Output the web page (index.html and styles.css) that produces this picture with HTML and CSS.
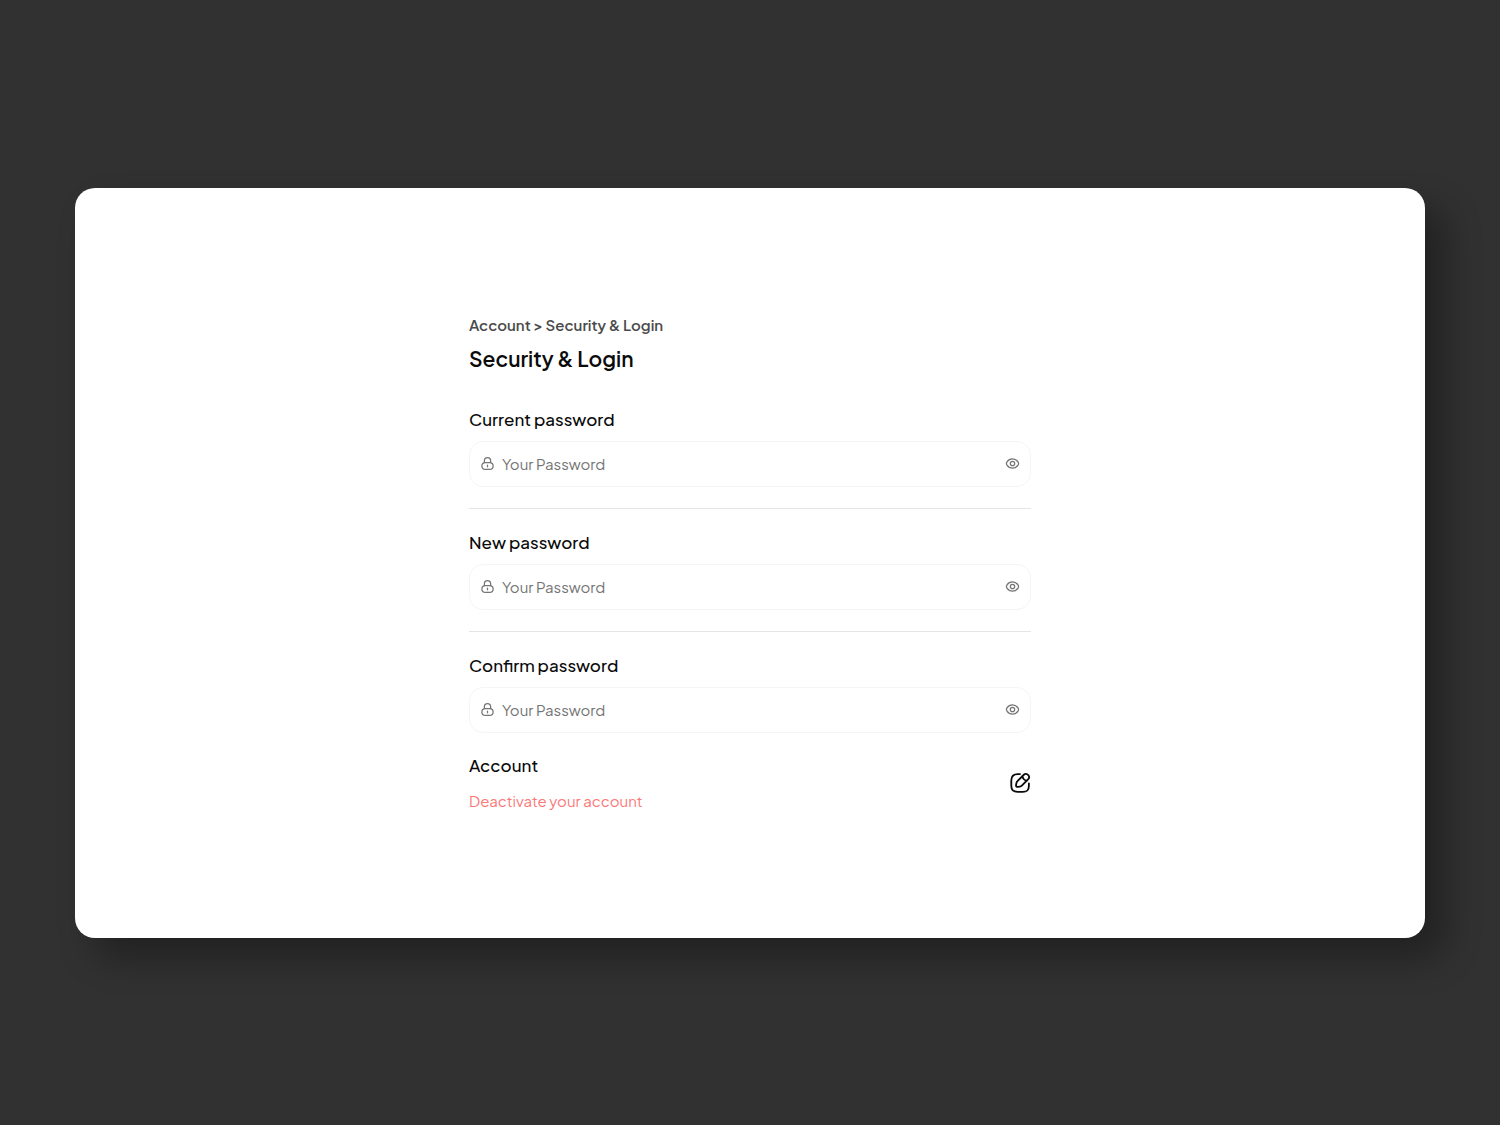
FILE: index.html
```html
<!DOCTYPE html>
<html lang="en">
<head>
<meta charset="utf-8">
<meta name="viewport" content="width=device-width, initial-scale=1">
<title>Security &amp; Login</title>
<link rel="stylesheet" href="styles.css">
</head>
<body>
<svg class="sprite" aria-hidden="true">
  <symbol id="lock" viewBox="0 0 24 24">
    <path d="M7 10.500V7.500c0-3 2-5 5-5s5 2 5 5v3M12 14.700v2.600M8.500 21.500c-3.800 0-5.500-1.700-5.500-5.500s1.700-5.500 5.500-5.500h7c3.800 0 5.500 1.700 5.500 5.500s-1.700 5.500-5.500 5.500Z"/>
  </symbol>
  <symbol id="eye" viewBox="0 0 24 24">
    <circle cx="12" cy="12" r="3.500"/>
    <path d="M12 19.500c3.800 0 6.800-1.700 8.800-4.800 1.200-1.800 1.200-3.600 0-5.400-2-3.100-5-4.800-8.800-4.800s-6.800 1.700-8.800 4.800c-1.200 1.800-1.200 3.600 0 5.400 2 3.100 5 4.800 8.800 4.800Z"/>
  </symbol>
  <symbol id="edit" viewBox="0 0 24 24">
    <path d="M12 2.300H9.500c-5 0-7 2-7 7V15c0 5 2 6.700 7 6.700H15c5 0 6.700-1.700 6.700-6.700v-2.500"/>
    <path d="M16.200 3 9.200 10c-.7.700-1 1.300-1.100 2.100l-.4 2.300c-.2 1.200.7 2 1.900 1.900l2.300-.4c.8-.1 1.400-.4 2.100-1.100l7-7c1.200-1.200 1.300-2.900 0-4.500-1.500-1.600-3.500-1.600-4.800-.3Z"/>
    <path d="M14.500 4.800c.6 2.400 2.400 4.200 4.700 4.800"/>
  </symbol>
</svg>
<main class="card">
  <form class="settings">
    <nav class="breadcrumb" aria-label="Breadcrumb"><a href="#account">Account</a> &gt; <a href="#security">Security &amp; Login</a></nav>
    <h1 class="title" id="security">Security &amp; Login</h1>
    <div class="group">
      <label class="label" for="current">Current password</label>
      <div class="field">
        <svg class="icon"><use href="#lock"/></svg>
        <input class="input" id="current" type="password" placeholder="Your Password">
        <button class="icon-button" type="button" aria-label="Show current password"><svg class="icon"><use href="#eye"/></svg></button>
      </div>
    </div>
    <hr class="divider">
    <div class="group">
      <label class="label" for="new">New password</label>
      <div class="field">
        <svg class="icon"><use href="#lock"/></svg>
        <input class="input" id="new" type="password" placeholder="Your Password">
        <button class="icon-button" type="button" aria-label="Show new password"><svg class="icon"><use href="#eye"/></svg></button>
      </div>
    </div>
    <hr class="divider">
    <div class="group">
      <label class="label" for="confirm">Confirm password</label>
      <div class="field">
        <svg class="icon"><use href="#lock"/></svg>
        <input class="input" id="confirm" type="password" placeholder="Your Password">
        <button class="icon-button" type="button" aria-label="Show confirmed password"><svg class="icon"><use href="#eye"/></svg></button>
      </div>
    </div>
    <section class="account" id="account">
      <div class="account-text">
        <h2 class="label">Account</h2>
        <a class="danger" href="#deactivate">Deactivate your account</a>
      </div>
      <button class="icon-button" type="button" aria-label="Edit account"><svg class="icon icon-large"><use href="#edit"/></svg></button>
    </section>
  </form>
</main>
</body>
</html>
```
FILE: styles.css
```css
* {
  box-sizing: border-box;
}

body {
  margin: 0;
  min-height: 100vh;
  display: flex;
  align-items: center;
  justify-content: center;
  background: #313131;
  color: #0b0b0b;
  font: 16px/24px "Plus Jakarta Sans", Inter, sans-serif;
}

.sprite {
  position: absolute;
  width: 0;
  height: 0;
}

.card {
  width: 90%;
  min-height: 66.667vh;
  display: flex;
  align-items: center;
  justify-content: center;
  padding: 32px 24px;
  border-radius: 20px;
  background: #fff;
  box-shadow: 20px 20px 36px rgba(0, 0, 0, 0.32);
}

.settings {
  width: 100%;
  max-width: 562px;
}

.breadcrumb {
  color: #4b4b4b;
  font-size: 15px;
  font-weight: 600;
}

.breadcrumb a {
  color: inherit;
  text-decoration: none;
}

.title {
  margin: 6px 0 32px;
  font-size: 21px;
  font-weight: 600;
  line-height: 32px;
}

.group {
  display: flex;
  flex-direction: column;
  gap: 10px;
}

.label {
  margin: 0;
  font-size: 17px;
  font-weight: 500;
}

.field {
  display: flex;
  align-items: center;
  gap: 7px;
  height: 46px;
  padding: 0 10px;
  border: 1px solid #f5f5f5;
  border-radius: 14px;
  color: #757575;
}

.input {
  flex: 1;
  min-width: 0;
  padding: 0;
  border: 0;
  outline: 0;
  background: none;
  color: inherit;
  font: 15px/24px "Plus Jakarta Sans", Inter, sans-serif;
}

.input::placeholder {
  color: #757575;
  opacity: 1;
}

.divider {
  height: 1px;
  margin: 21px 0;
  border: 0;
  background: #e5e5e5;
}

.icon {
  flex: none;
  display: block;
  width: 15px;
  height: 15px;
  fill: none;
  stroke: currentColor;
  stroke-width: 2;
  stroke-linecap: round;
  stroke-linejoin: round;
}

.icon-large {
  width: 22px;
  height: 22px;
}

.icon-button {
  flex: none;
  padding: 0;
  border: 0;
  background: none;
  color: inherit;
  cursor: pointer;
}

.account {
  display: flex;
  align-items: center;
  justify-content: space-between;
  margin-top: 20px;
}

.account-text {
  display: flex;
  flex-direction: column;
  gap: 12px;
}

.danger {
  color: #fb7878;
  font-size: 15px;
  text-decoration: none;
}
```
